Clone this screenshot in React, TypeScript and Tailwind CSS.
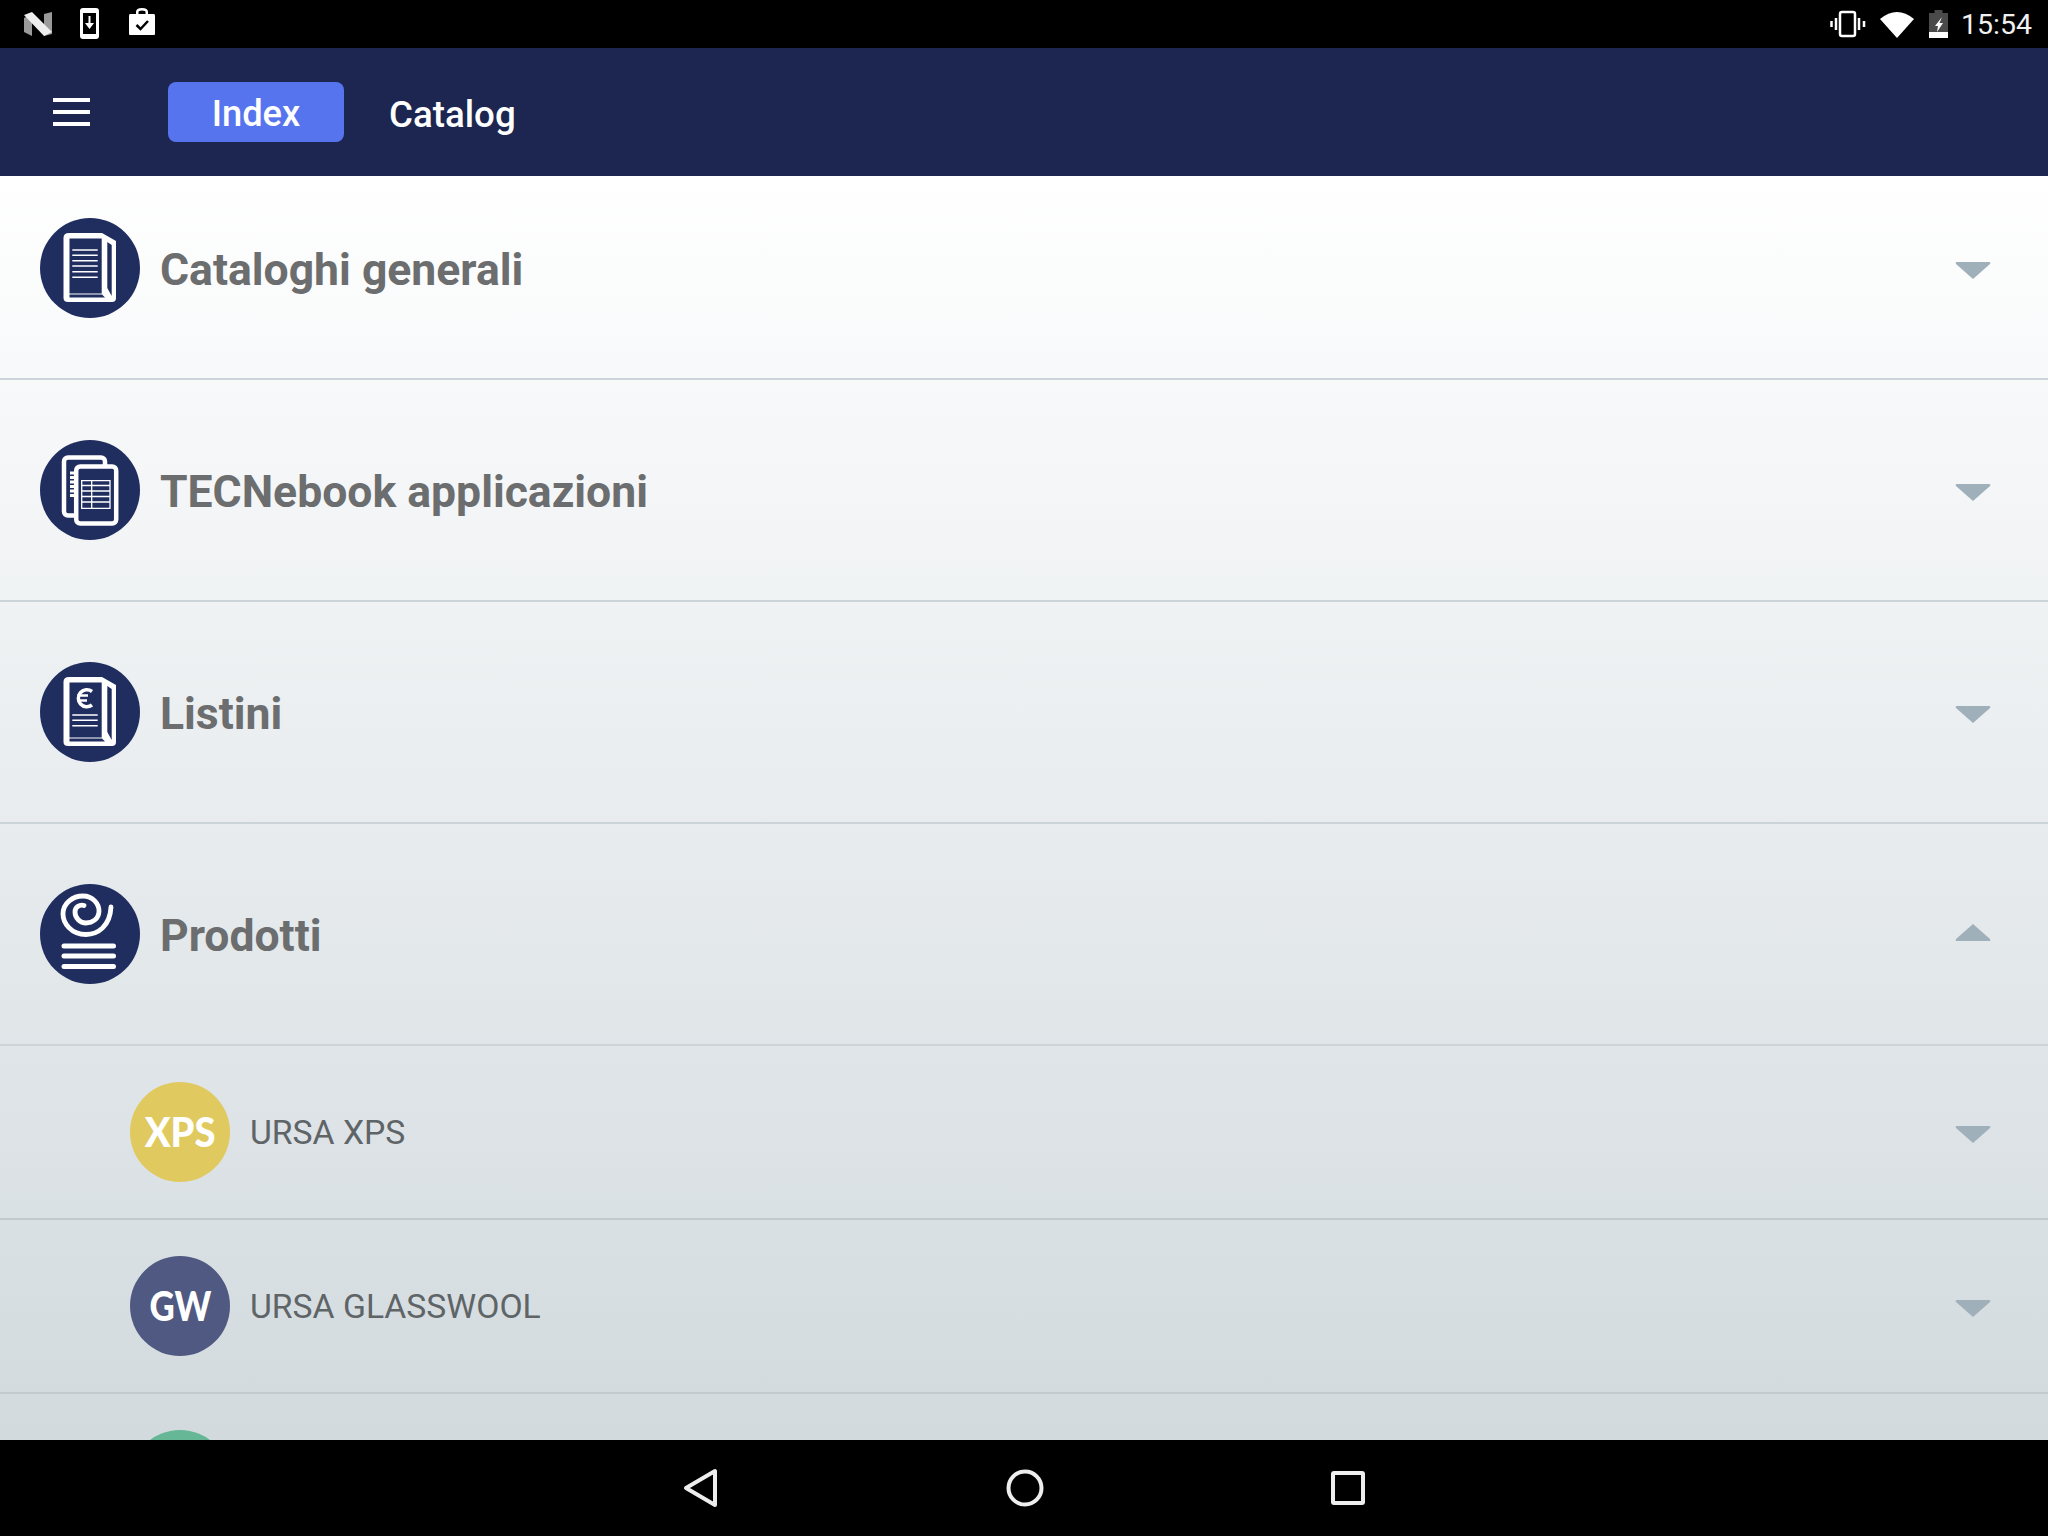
import React from "react";

const Book = ({ euro }: { euro?: boolean }) => (
  <svg viewBox="0 0 100 100" className="h-[100px] w-[100px] shrink-0" fill="none" stroke="#fff">
    <circle cx="50" cy="50" r="50" fill="#202d5f" stroke="none" />
    <path d="M29 15H62L76 23V80Q76 84 72 84H28Q23.500 84 23.500 80V20Q23.500 15 29 15Z" fill="#fff" stroke="none" />
    <path d="M29.500 20.500H61.700V75.500H29.500Z" fill="#202d5f" stroke="none" />
    <path d="M67.300 24L71.700 27V78L67.300 70Z" fill="#202d5f" stroke="none" />
    <path d="M29.500 76.500H62L65 79.500H29.500Z" fill="#202d5f" stroke="none" />
    {euro ? (
      <>
        <path d="M52 29.500A8.500 8.500 0 1 0 52 43" strokeWidth="3.500" />
        <path d="M37.500 33.500H48M37.500 38.500H47" strokeWidth="2.400" />
        <path d="M32.300 53H57.700M32.300 58.300H57.700M32.300 63.700H57.700" strokeWidth="1.600" />
      </>
    ) : (
      <path d="M32.300 32H57.700M32.300 37.300H57.700M32.300 42.700H57.700M32.300 48H57.700M32.300 53.700H57.700M32.300 59.300H57.700" strokeWidth="1.600" />
    )}
  </svg>
);

const Sheets = () => (
  <svg viewBox="0 0 100 100" className="h-[100px] w-[100px] shrink-0" fill="none" stroke="#fff">
    <circle cx="50" cy="50" r="50" fill="#202d5f" stroke="none" />
    <rect x="24" y="17.500" width="41" height="58" rx="4" strokeWidth="4.500" />
    <path d="M32 31.500V58" strokeWidth="4" strokeDasharray="3 1.500" />
    <rect x="36.200" y="26.500" width="40" height="57" rx="4" fill="#202d5f" strokeWidth="4.500" />
    <path d="M41.700 40.700H70V68.300H41.700ZM41.700 45.500H70M41.700 51H70M41.700 56.500H70M41.700 62H70M51.700 40.700V68.300" strokeWidth="1.300" />
  </svg>
);

const Roll = () => (
  <svg viewBox="0 0 100 100" className="h-[100px] w-[100px] shrink-0" fill="none" stroke="#fff" strokeLinecap="round">
    <circle cx="50" cy="50" r="50" fill="#202d5f" stroke="none" />
    <path d="M71 23C70 42 58 50.500 46 50.500C31 50.500 23 39 23 30C23 19 33 12 43 12C53 12 59 20 59 27C59 35 52 39 46 39C40 39 35 34 35 28C35 23 40 20 44 21.500" strokeWidth="4.800" />
    <path d="M24 62H73.500M24 72H73.500M24 82.500H73.500" strokeWidth="5" />
  </svg>
);

const Caret = ({ up, className }: { up?: boolean; className?: string }) => (
  <svg viewBox="0 0 36 20" className={`h-5 w-9 shrink-0 ${className ?? ""}`} fill="#9fb0ba">
    <path d={up ? "M18 1L35 16Q36 18 34 18H2Q0 18 1 16Z" : "M18 19L35 4Q36 2 34 2H2Q0 2 1 4Z"} />
  </svg>
);

const Row = ({ icon, label, up, first }: { icon: React.ReactNode; label: string; up?: boolean; first?: boolean }) => (
  <div className={`flex items-center border-b-2 border-[#cdd4d9] pl-10 pr-[57px] ${first ? "h-[204px] pb-[18px]" : "h-[222px]"}`}>
    {icon}
    <span className="ml-5 flex-1 pt-[5px] font-['Roboto',sans-serif] text-[44.5px] font-bold text-[#6b6d6f]">{label}</span>
    <Caret up={up} className={up ? "-mt-[2px]" : "mt-1"} />
  </div>
);

const SubRow = ({ bg, children, label }: { bg: string; children: React.ReactNode; label: string }) => (
  <div className="flex h-[174px] items-center border-b-2 border-[#c3cacf] pl-[130px] pr-[57px]">
    <div className={`flex h-[100px] w-[100px] shrink-0 items-center justify-center rounded-full font-['Lato',sans-serif] text-[41px] font-black text-white ${bg}`}>{children}</div>
    <span className="ml-5 flex-1 pt-[2px] font-['Roboto',sans-serif] text-[33.7px] text-[#5f6467]">{label}</span>
    <Caret className="mt-[3px]" />
  </div>
);

export default function App() {
  return (
    <div className="flex h-[1536px] w-[2048px] flex-col overflow-hidden bg-black font-['Roboto',sans-serif]">
      <div className="flex h-12 shrink-0 items-center bg-black pl-6 pr-4">
        <svg viewBox="0 0 28 24" className="h-6 w-7">
          <path d="M0 6L8 2V24L0 20Z" fill="#9a9a9a" />
          <path d="M20 2L28 0V22L20 24Z" fill="#9a9a9a" />
          <path d="M0 3L8 0L28 20L20 24Z" fill="#eee" />
        </svg>
        <svg viewBox="0 0 20 32" className="ml-7 h-8 w-5">
          <rect width="19" height="31" rx="3" fill="#fff" />
          <rect x="3" y="5" width="13" height="21" fill="#000" />
          <path d="M8.500 8H10.500V15H14L9.500 21L5 15H8.500Z" fill="#fff" />
        </svg>
        <svg viewBox="0 0 28 30" className="-mt-1 ml-7 h-[30px] w-7">
          <path d="M2 7H8V5Q8 1 14 1Q20 1 20 5V7H26Q27 7 27 9V27Q27 28 26 28H2Q1 28 1 27V9Q1 7 2 7ZM10.500 7H17.500V5Q17.500 3.500 14 3.500Q10.500 3.500 10.500 5Z" fill="#fff" fillRule="evenodd" />
          <path d="M8.500 18L12.500 22L20 14" stroke="#000" strokeWidth="2.500" fill="none" />
        </svg>
        <div className="flex-1" />
        <svg viewBox="0 0 36 28" className="h-7 w-9" fill="none" stroke="#fff">
          <rect x="10" y="2" width="15" height="24" rx="2" strokeWidth="2.500" />
          <path d="M6 8V20M1.500 11V17M29 8V20M34 11V17" strokeWidth="2.500" />
        </svg>
        <svg viewBox="0 0 34 27" className="ml-[14px] h-[27px] w-[34px]">
          <path d="M0 8Q17 -6 34 8L17 27Z" fill="#fff" />
        </svg>
        <svg viewBox="0 0 19 28" className="ml-[15px] h-7 w-[19px]">
          <path d="M5.500 0H13.500V3H19V28H0V3H5.500Z" fill="#4a4a4a" />
          <path d="M0 22H19V28H0Z" fill="#fff" />
          <path d="M13 7L6 16H9L8 22L14 13H10.500Z" fill="#fff" />
        </svg>
        <span className="ml-[13px] pt-[3px] text-[28.5px] leading-none text-[#f0f0f0]">15:54</span>
      </div>

      <div className="flex h-[128px] shrink-0 items-center bg-[#1d2651] pl-[53px]">
        <div className="flex w-[37px] flex-col gap-2">
          <div className="h-1 bg-white" />
          <div className="h-1 bg-white" />
          <div className="h-1 bg-white" />
        </div>
        <div className="ml-[78px] flex h-[60px] w-[176px] items-center justify-center rounded-lg bg-[#5574ee] pt-[5px] text-[36.3px] font-medium text-white">Index</div>
        <span className="ml-[45px] pt-[5px] text-[36.7px] font-medium text-white">Catalog</span>
      </div>

      <div className="h-[1264px] shrink-0 overflow-hidden bg-gradient-to-b from-white to-[#d2dade]">
        <Row first icon={<Book />} label="Cataloghi generali" />
        <Row icon={<Sheets />} label="TECNebook applicazioni" />
        <Row icon={<Book euro />} label="Listini" />
        <Row up icon={<Roll />} label="Prodotti" />
        <SubRow bg="bg-[#e0ca60]" label="URSA XPS"><span className="inline-block scale-x-[0.93]">XPS</span></SubRow>
        <SubRow bg="bg-[#4f5981]" label="URSA GLASSWOOL"><span className="inline-block scale-x-[0.85]">GW</span></SubRow>
        <div className="pl-[130px] pt-[36px]">
          <div className="h-[100px] w-[100px] rounded-full bg-[#66b796]" />
        </div>
      </div>

      <div className="flex h-[96px] shrink-0 items-center justify-center bg-black">
        <div className="flex items-center gap-[287px]">
          <svg viewBox="0 0 36 40" className="h-10 w-9" fill="none" stroke="#eee" strokeWidth="4" strokeLinejoin="round">
            <path d="M32 3V37L3 20Z" />
          </svg>
          <svg viewBox="0 0 38 38" className="h-[38px] w-[38px]" fill="none" stroke="#eee" strokeWidth="4">
            <circle cx="19" cy="19" r="16.500" />
          </svg>
          <svg viewBox="0 0 34 34" className="h-[34px] w-[34px]" fill="none" stroke="#eee" strokeWidth="4">
            <rect x="2" y="2" width="30" height="30" rx="1" />
          </svg>
        </div>
      </div>
    </div>
  );
}
